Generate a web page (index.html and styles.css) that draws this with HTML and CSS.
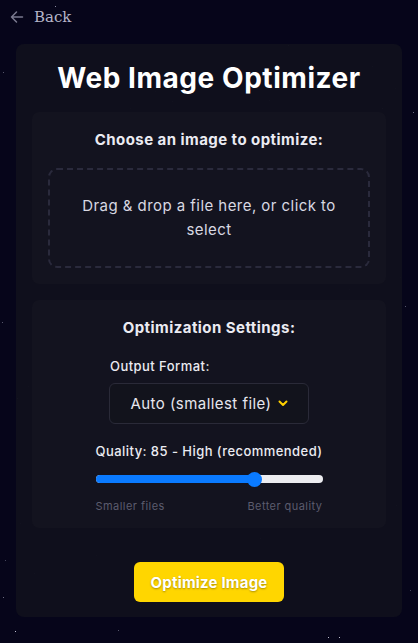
FILE: index.html
```html
<!DOCTYPE html>
<html lang="en">
<head>
<meta charset="utf-8">
<title>Web Image Optimizer</title>
<link rel="stylesheet" href="styles.css">
</head>
<body>
<div class="stars" aria-hidden="true"></div>
<div class="page">
  <a class="back" href="#">
    <svg class="back-icon" width="14" height="14" viewBox="0 0 14 14" fill="none" stroke="currentColor" stroke-width="1.5" stroke-linecap="round" stroke-linejoin="round"><path d="M12.5 7H1.5M6.5 2L1.5 7l5 5"/></svg>
    <span>Back</span>
  </a>
  <main class="card">
    <h1 class="title">Web Image Optimizer</h1>
    <section class="panel">
      <h2 class="panel-title">Choose an image to optimize:</h2>
      <div class="dropzone">Drag &amp; drop a file here, or click to select</div>
    </section>
    <section class="panel settings">
      <h2 class="panel-title">Optimization Settings:</h2>
      <div class="format-group">
        <div class="label">Output Format:</div>
        <div class="select">
          <span>Auto (smallest file)</span>
          <svg width="10" height="7" viewBox="0 0 10 7" fill="none" stroke="#ffd000" stroke-width="2" stroke-linecap="round" stroke-linejoin="round"><path d="M1.5 1.5l3.5 3.5 3.5-3.5"/></svg>
        </div>
      </div>
      <div class="quality-group">
        <div class="label">Quality: 85 - High (recommended)</div>
        <div class="slider">
          <div class="slider-fill" style="width:70%"></div>
          <div class="slider-thumb"></div>
        </div>
        <div class="slider-labels"><span>Smaller files</span><span>Better quality</span></div>
      </div>
    </section>
    <button class="primary">Optimize Image</button>
  </main>
</div>
</body>
</html>
```
FILE: styles.css
```css
* { box-sizing: border-box; }
html, body { margin: 0; padding: 0; }
body {
  background: #06051a;
  font-family: "Inter", "DejaVu Sans", sans-serif;
  letter-spacing: 0.45px;
  color: #fff;
  min-height: 643px;
  overflow: hidden;
  position: relative;
}
.stars {
  position: absolute;
  left: 0; top: 0;
  width: 1px; height: 1px;
  background: transparent;
  box-shadow:
    55px 6px #8a8aa0, 3px 72px #55556a, 288px 45px #6a6a80, 305px 60px #44445a,
    372px 66px #55556a, 395px 88px #44445a, 413px 112px #6a6a80, 269px 100px #55556a,
    155px 91px #44445a, 172px 101px #55556a, 130px 108px #44445a, 382px 108px #6a6a80,
    37px 119px #55556a, 230px 129px #44445a, 67px 177px #44445a, 240px 174px #55556a,
    384px 141px #6a6a80, 273px 227px #55556a, 236px 191px #44445a, 84px 189px #55556a,
    336px 206px #6a6a80, 2px 322px #55556a, 28px 386px #44445a, 17px 398px #8a8aa0,
    33px 455px #55556a, 20px 523px #55556a, 34px 573px #55556a, 15px 631px #c0c0d0,
    118px 281px #44445a, 205px 283px #55556a, 349px 289px #44445a, 400px 277px #44445a,
    195px 314px #55556a, 264px 314px #44445a, 405px 306px #55556a, 224px 360px #44445a,
    318px 380px #55556a, 320px 464px #44445a, 290px 473px #55556a, 363px 500px #44445a,
    396px 505px #55556a, 140px 607px #8a8aa0, 156px 604px #6a6a80, 118px 630px #55556a,
    328px 637px #c0c0d0, 339px 637px #c0c0d0, 410px 590px #44445a, 5px 560px #44445a,
    3px 597px #6a6a80, 260px 538px #55556a, 96px 555px #44445a;
  pointer-events: none;
}
.page {
  position: relative;
  padding: 0 16px;
}
.back {
  display: flex;
  align-items: center;
  gap: 10px;
  height: 32px;
  margin-left: -6px;
  padding-top: 1px;
  color: #b4b4c8;
  text-decoration: none;
  font-family: "DejaVu Serif", serif;
  font-size: 15px;
  letter-spacing: 0;
}
.back-icon { color: #7a7a90; }
.card {
  margin-top: 12px;
  background: rgba(16, 16, 28, 0.96);
  border-radius: 8px;
  padding: 16px 16px 15px;
  display: flex;
  flex-direction: column;
  gap: 16px;
}
.title {
  margin: 0;
  text-align: center;
  font-size: 28px;
  line-height: 36px;
  font-weight: 700;
  letter-spacing: 0.55px;
  color: #fff;
}
.panel {
  background: #13131f;
  border-radius: 7px;
  padding: 16px;
  display: flex;
  flex-direction: column;
  align-items: center;
  gap: 16px;
}
.panel-title {
  margin: 0;
  font-size: 15px;
  line-height: 24px;
  font-weight: 700;
  color: #ebebf2;
}
.dropzone {
  align-self: stretch;
  border: 2px dashed #2a2a3c;
  border-radius: 9px;
  padding: 24px 26px;
  text-align: center;
  font-size: 15px;
  line-height: 24px;
  color: #d8d8e2;
}
.settings { gap: 0; padding-top: 16px; padding-bottom: 14px; }
.format-group {
  margin-top: 16px;
  width: 200px;
  display: flex;
  flex-direction: column;
  gap: 7px;
}
.label {
  font-size: 13px;
  line-height: 20px;
  font-weight: 500;
  color: #ebebf2;
  padding-left: 1px;
}
.select {
  height: 41px;
  border: 1px solid #2a2a38;
  border-radius: 6px;
  background: #12131c;
  display: flex;
  align-items: center;
  justify-content: center;
  gap: 6px;
  font-size: 15px;
  color: #e6e6ee;
}
.quality-group {
  margin-top: 17px;
  width: 227px;
  display: flex;
  flex-direction: column;
}
.quality-group .label { padding-left: 0; }
.slider {
  position: relative;
  margin-top: 14px;
  height: 8px;
  border-radius: 4px;
  background: #ececf0;
}
.slider-fill {
  height: 100%;
  border-radius: 4px;
  background: #0a7aff;
}
.slider-thumb {
  position: absolute;
  top: 50%;
  left: 70%;
  width: 15px;
  height: 15px;
  margin: -7.5px 0 0 -7.5px;
  border-radius: 50%;
  background: #0a7aff;
}
.slider-labels {
  margin-top: 15px;
  display: flex;
  justify-content: space-between;
  font-size: 11px;
  line-height: 16px;
  color: #5c5c6e;
}
.primary {
  align-self: center;
  margin-top: 18px;
  width: 150px;
  height: 40px;
  border: none;
  border-radius: 6px;
  background: #ffd600;
  color: #fff;
  font-family: inherit;
  font-size: 15px;
  font-weight: 700;
  letter-spacing: 0.2px;
  text-shadow: 0 1px 2px rgba(0,0,0,0.35);
}
```
